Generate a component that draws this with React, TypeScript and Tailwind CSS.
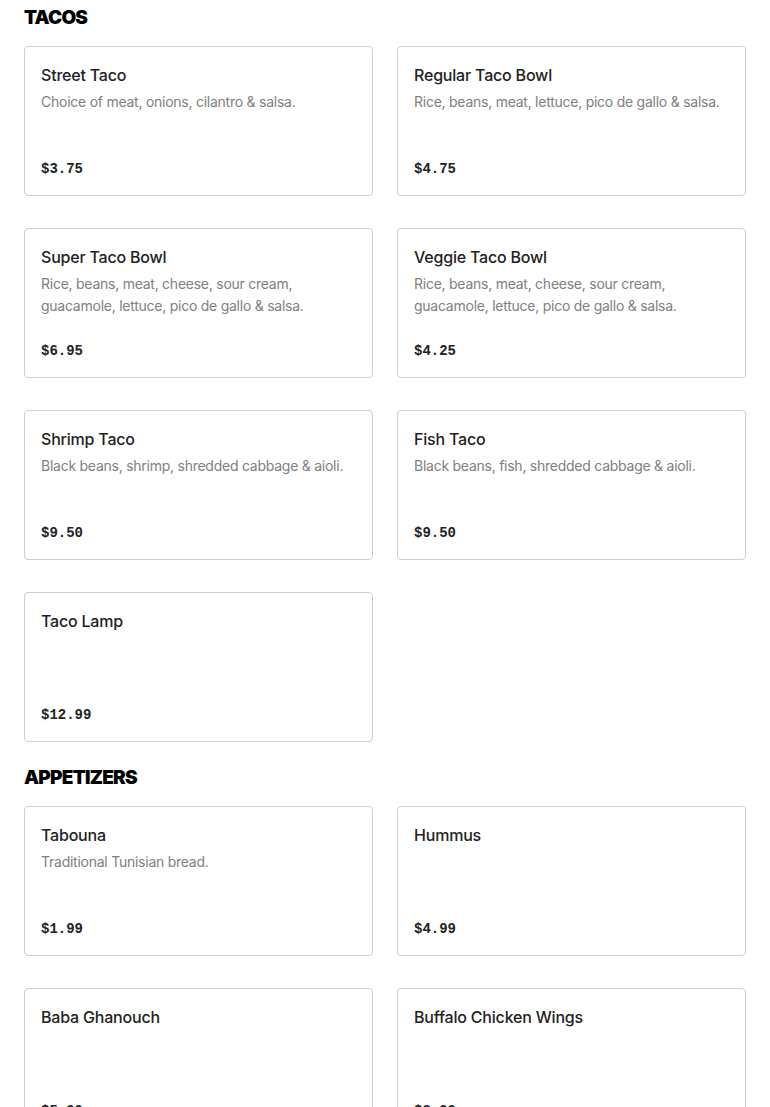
import React from "react";

type Item = { name: string; desc?: string; price: string };

const tacos: Item[] = [
  { name: "Street Taco", desc: "Choice of meat, onions, cilantro & salsa.", price: "$3.75" },
  { name: "Regular Taco Bowl", desc: "Rice, beans, meat, lettuce, pico de gallo & salsa.", price: "$4.75" },
  { name: "Super Taco Bowl", desc: "Rice, beans, meat, cheese, sour cream, guacamole, lettuce, pico de gallo & salsa.", price: "$6.95" },
  { name: "Veggie Taco Bowl", desc: "Rice, beans, meat, cheese, sour cream, guacamole, lettuce, pico de gallo & salsa.", price: "$4.25" },
  { name: "Shrimp Taco", desc: "Black beans, shrimp, shredded cabbage & aioli.", price: "$9.50" },
  { name: "Fish Taco", desc: "Black beans, fish, shredded cabbage & aioli.", price: "$9.50" },
  { name: "Taco Lamp", price: "$12.99" },
];

const appetizers: Item[] = [
  { name: "Tabouna", desc: "Traditional Tunisian bread.", price: "$1.99" },
  { name: "Hummus", price: "$4.99" },
  { name: "Baba Ghanouch", price: "$5.99" },
  { name: "Buffalo Chicken Wings", price: "$8.99" },
];

function Card({ item }: { item: Item }) {
  return (
    <div className="h-[150px] border border-[#cfcfcf] rounded-[4px] bg-white px-4 pt-4 pb-4 flex flex-col justify-between">
      <div>
        <div className="text-[16px] leading-[24px] font-medium text-[#222] tracking-[-0.2px]" style={{ fontFamily: "Inter, 'Noto Sans', sans-serif" }}>
          {item.name}
        </div>
        {item.desc && (
          <div className="mt-1 pr-[6px] text-[14px] leading-[22px] text-[#808080] tracking-[-0.25px]" style={{ fontFamily: "Inter, 'Noto Sans', sans-serif" }}>
            {item.desc}
          </div>
        )}
      </div>
      <div className="text-[14px] leading-[22px] font-bold text-[#222] translate-y-[1px]" style={{ fontFamily: "'Liberation Mono', monospace" }}>
        {item.price}
      </div>
    </div>
  );
}

function Section({ title, items, first }: { title: string; items: Item[]; first?: boolean }) {
  return (
    <section className={first ? "" : "mt-[22px]"}>
      <h2 className="text-[19px] leading-[28px] font-black text-black uppercase mb-[14px] tracking-[-0.04em]" style={{ fontFamily: "Inter, 'Noto Sans', sans-serif" }}>
        {title}
      </h2>
      <div className="grid grid-cols-2 gap-x-6 gap-y-8">
        {items.map((it) => (
          <Card key={it.name} item={it} />
        ))}
      </div>
    </section>
  );
}

export default function App() {
  return (
    <div className="bg-white min-h-screen px-6 pt-[4px]">
      <Section title="Tacos" items={tacos} first />
      <Section title="Appetizers" items={appetizers} />
    </div>
  );
}
